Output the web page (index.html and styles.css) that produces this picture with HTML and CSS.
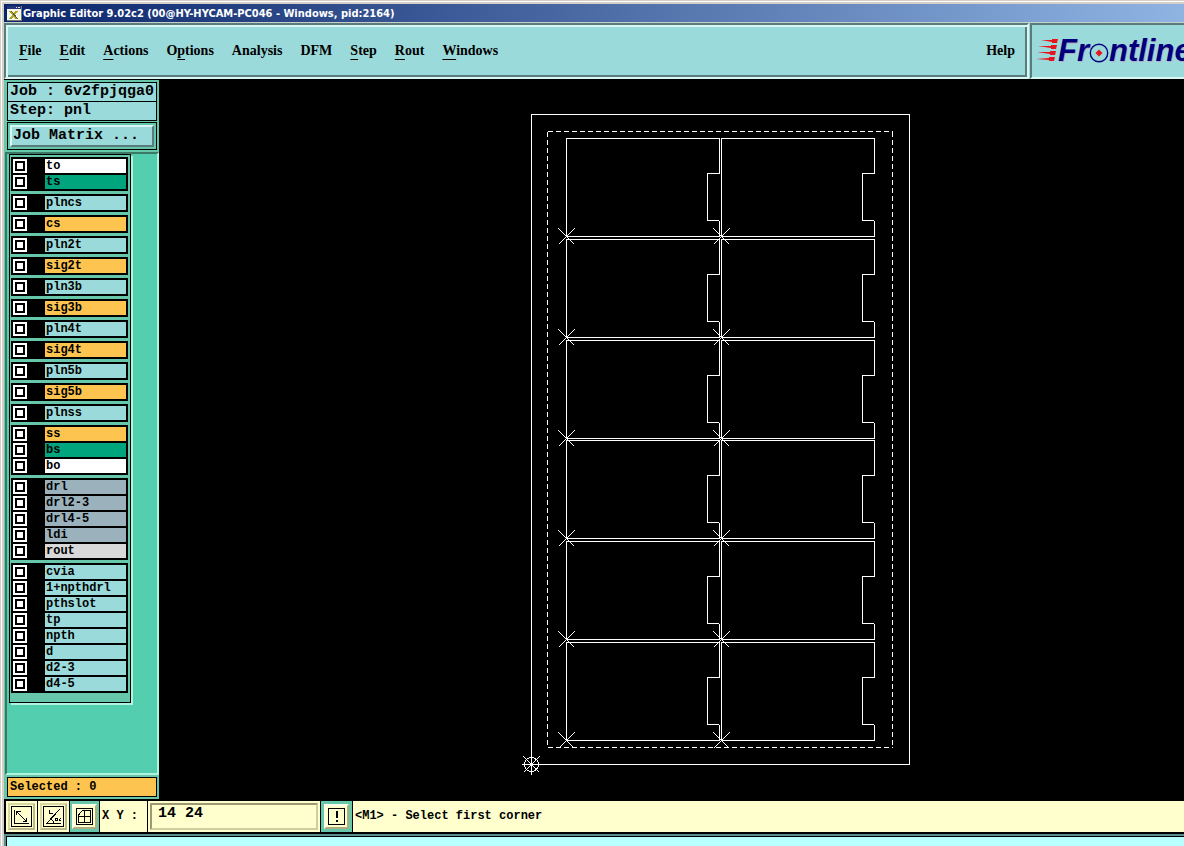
FILE: index.html
```html
<!DOCTYPE html>
<html lang="en">
<head>
<meta charset="utf-8">
<title>Graphic Editor</title>
<link rel="stylesheet" href="styles.css">
</head>
<body>
<div class="window">
  <header class="titlebar">
    <svg class="app-icon" width="15" height="15" viewBox="0 0 15 15" aria-hidden="true" shape-rendering="crispEdges">
      <rect width="15" height="15" fill="#77776f"/>
      <rect width="14" height="14" fill="#f6f6ea"/>
      <rect width="14" height="3" fill="#24357c"/>
      <path d="M9 1.500h1M11 1.500h2" stroke="#ddd"/>
      <path d="M3 5l7 8M10 5l-7 8" stroke="#a8a428" stroke-width="2"/>
      <path d="M4 5l7 8" stroke="#5d5c22"/>
    </svg>
    <h1 class="title">Graphic Editor 9.02c2 (00@HY-HYCAM-PC046 - Windows, pid:2164)</h1>
  </header>

  <div class="menu-row">
    <nav class="menubar">
      <button class="menu"><u>F</u>ile</button>
      <button class="menu"><u>E</u>dit</button>
      <button class="menu"><u>A</u>ctions</button>
      <button class="menu">O<u>p</u>tions</button>
      <button class="menu">Analysis</button>
      <button class="menu">DFM</button>
      <button class="menu"><u>S</u>tep</button>
      <button class="menu"><u>R</u>out</button>
      <button class="menu"><u>W</u>indows</button>
      <button class="menu menu-help">Help</button>
    </nav>
    <div class="brand">
      <svg width="22" height="24" viewBox="0 0 22 24" aria-hidden="true">
        <path d="M5 1l11 0 0-1 6 0-1 4-5 0 0-1zM2 7l13 0 0-1 6 0-1 4-5 0 0-1zM1 13l13 0 0-1 6 0-1 4-5 0 0-1zM0 20l13-1 0-1 6 0-1 4-5 0 0-1z" fill="#e8131c"/>
      </svg>
      <span class="brand-text">Fr</span>
      <svg width="20" height="24" viewBox="0 0 20 24" role="img" aria-label="o">
        <circle cx="10" cy="14" r="8.700" fill="none" stroke="#00007d" stroke-width="1.400"/>
        <path d="M10 10.500l3.500 3.500-3.500 3.500L6.500 14z" fill="#e8131c"/>
      </svg>
      <span class="brand-text">ntline</span>
    </div>
  </div>

  <main class="work">
    <aside class="sidebar">
      <div class="job">
        <div class="field">Job : 6v2fpjqga0</div>
        <div class="field">Step: pnl</div>
      </div>
      <div class="matrix"><button class="matrix-button">Job Matrix ...</button></div>
      <div class="layers-pane">
        <div class="layers">
          <div class="group">
            <label class="layer"><input type="checkbox"><span class="name white">to</span></label>
            <label class="layer"><input type="checkbox"><span class="name green">ts</span></label>
          </div>
          <div class="group"><label class="layer"><input type="checkbox"><span class="name">plncs</span></label></div>
          <div class="group"><label class="layer"><input type="checkbox"><span class="name orange">cs</span></label></div>
          <div class="group"><label class="layer"><input type="checkbox"><span class="name">pln2t</span></label></div>
          <div class="group"><label class="layer"><input type="checkbox"><span class="name orange">sig2t</span></label></div>
          <div class="group"><label class="layer"><input type="checkbox"><span class="name">pln3b</span></label></div>
          <div class="group"><label class="layer"><input type="checkbox"><span class="name orange">sig3b</span></label></div>
          <div class="group"><label class="layer"><input type="checkbox"><span class="name">pln4t</span></label></div>
          <div class="group"><label class="layer"><input type="checkbox"><span class="name orange">sig4t</span></label></div>
          <div class="group"><label class="layer"><input type="checkbox"><span class="name">pln5b</span></label></div>
          <div class="group"><label class="layer"><input type="checkbox"><span class="name orange">sig5b</span></label></div>
          <div class="group"><label class="layer"><input type="checkbox"><span class="name">plnss</span></label></div>
          <div class="group">
            <label class="layer"><input type="checkbox"><span class="name orange">ss</span></label>
            <label class="layer"><input type="checkbox"><span class="name green">bs</span></label>
            <label class="layer"><input type="checkbox"><span class="name white">bo</span></label>
          </div>
          <div class="group">
            <label class="layer"><input type="checkbox"><span class="name slate">drl</span></label>
            <label class="layer"><input type="checkbox"><span class="name slate">drl2-3</span></label>
            <label class="layer"><input type="checkbox"><span class="name slate">drl4-5</span></label>
            <label class="layer"><input type="checkbox"><span class="name slate">ldi</span></label>
            <label class="layer"><input type="checkbox"><span class="name gray">rout</span></label>
          </div>
          <div class="group">
            <label class="layer"><input type="checkbox"><span class="name">cvia</span></label>
            <label class="layer"><input type="checkbox"><span class="name">1+npthdrl</span></label>
            <label class="layer"><input type="checkbox"><span class="name">pthslot</span></label>
            <label class="layer"><input type="checkbox"><span class="name">tp</span></label>
            <label class="layer"><input type="checkbox"><span class="name">npth</span></label>
            <label class="layer"><input type="checkbox"><span class="name">d</span></label>
            <label class="layer"><input type="checkbox"><span class="name">d2-3</span></label>
            <label class="layer"><input type="checkbox"><span class="name">d4-5</span></label>
          </div>
        </div>
      </div>
      <div class="selected">Selected : 0</div>
    </aside>

    <svg class="canvas" role="img" aria-label="Panel layout" shape-rendering="crispEdges">
      <defs>
        <path id="cell" d="M0 0H153V35H141V82H152L153 83V98H0Z"/>
        <path id="mark" d="M-8-8L8 8M-8 8L8-8"/>
      </defs>
      <g transform="translate(372.5 35.5)" fill="none" stroke="#fff">
        <rect width="378" height="650"/>
        <path d="M16 17H361" stroke-dasharray="5 3"/>
        <path d="M361 17V633" stroke-dasharray="5 3"/>
        <path d="M16 17V633" stroke-dasharray="5 3"/>
        <path d="M16 633H361" stroke-dasharray="5 3"/>
        <use href="#cell" x="35" y="24"/><use href="#cell" x="190" y="24"/>
        <use href="#cell" x="35" y="125"/><use href="#cell" x="190" y="125"/>
        <use href="#cell" x="35" y="226"/><use href="#cell" x="190" y="226"/>
        <use href="#cell" x="35" y="326"/><use href="#cell" x="190" y="326"/>
        <use href="#cell" x="35" y="427"/><use href="#cell" x="190" y="427"/>
        <use href="#cell" x="35" y="528"/><use href="#cell" x="190" y="528"/>
        <use href="#mark" x="35" y="122"/><use href="#mark" x="190" y="122"/>
        <use href="#mark" x="35" y="223"/><use href="#mark" x="190" y="223"/>
        <use href="#mark" x="35" y="324"/><use href="#mark" x="190" y="324"/>
        <use href="#mark" x="35" y="424"/><use href="#mark" x="190" y="424"/>
        <use href="#mark" x="35" y="525"/><use href="#mark" x="190" y="525"/>
        <use href="#mark" x="35" y="626"/><use href="#mark" x="190" y="626"/>
        <use href="#mark" y="650"/>
        <circle r="7" cy="650"/>
        <path d="M-10 650H10M0 640V660"/>
      </g>
    </svg>
  </main>

  <footer class="toolbar">
    <button class="tool" aria-label="Zoom to area">
      <svg width="21" height="21" viewBox="0 0 21 21" fill="none" stroke="#000" shape-rendering="crispEdges">
        <path d="M.5.5h20v20H.5zM3.500 3.500v14h14M5 5l11 11M5.500 9V5.500h4M12 15.500h3.500v-4"/>
      </svg>
    </button>
    <button class="tool" aria-label="Angle mode">
      <svg width="21" height="21" viewBox="0 0 21 21" fill="none" stroke="#000" shape-rendering="crispEdges">
        <path d="M.5.5h20v20H.5zM17 3L3.500 17.500H18M6.500 4v3.500h3M8 12l3 5M12.500 12.500h2v2h-2zM18 12l-2 2 2 1"/>
      </svg>
    </button>
    <button class="tool tool-framed" aria-label="Grid snap">
      <svg width="17" height="17" viewBox="0 0 17 17" fill="none" stroke="#000" shape-rendering="crispEdges">
        <path d="M.5.5h16v16H.5zM2.500 14.500V7l4-4.500h8v12zM8.500 2.500v12M2.500 8.500h12"/>
      </svg>
    </button>
    <label class="xy-label" for="xy">X Y :</label>
    <div class="xy-box"><input class="xy" id="xy" type="text" value="14 24"></div>
    <button class="tool tool-framed tool-alert" aria-label="Alert">
      <svg width="17" height="17" viewBox="0 0 17 17" fill="none" stroke="#000" shape-rendering="crispEdges">
        <path d="M.5.5h16v16H.5z"/><path d="M8 3h2v7H8zM8 12h2v2H8z" fill="#000" stroke="none"/>
      </svg>
    </button>
    <output class="status">&lt;M1&gt; - Select first corner</output>
  </footer>
  <div class="message"></div>
</div>
</body>
</html>
```
FILE: styles.css
```css
*, *::before { box-sizing: border-box; }

body {
  margin: 0;
  background: #000;
  color: #000;
  font: bold 12px/14px "Liberation Mono", monospace;
}

button {
  margin: 0;
  padding: 0;
  border: 0;
  border-radius: 0;
  background: none;
  color: inherit;
  font: inherit;
}

.window {
  display: flex;
  flex-direction: column;
  min-height: 100vh;
  padding: 4px 0 0 4px;
  overflow: hidden;
  background: #000;
  box-shadow: inset 1px 1px #d4d0c8, inset 2px 2px #fff, inset 4px 4px #d4d0c8;
}

/* Title bar */
.titlebar {
  display: flex;
  align-items: center;
  gap: 1px;
  height: 19px;
  padding: 1px 3px 0;
  border-bottom: 1px solid #c8d0cc;
  background: linear-gradient(90deg, #0a246a, #8fb4e2);
}
.title {
  margin: 0;
  color: #fff;
  font: bold 11px/16px "DejaVu Sans Condensed", "DejaVu Sans", sans-serif;
  white-space: nowrap;
}

/* Menu bar and brand */
.menu-row {
  display: flex;
  height: 56px;
  background: #9bdada;
}
.menubar {
  display: flex;
  flex: 1;
  align-items: center;
  gap: 18px;
  padding: 0 12px 0 13px;
  border: 2px solid;
  border-color: #5b7c7c #d8f6f4 #d8f6f4 #5b7c7c;
  box-shadow: inset 2px 2px #d8f6f4, inset -2px -2px #5b7c7c;
  font: bold 14px/18px "Liberation Serif", serif;
}
.menu u { text-underline-offset: 4px; text-decoration-thickness: 1px; }
.menu-help { margin-left: auto; }
.brand {
  display: flex;
  flex: none;
  align-items: center;
  width: 154px;
  margin-left: 1px;
  padding-left: 4px;
  border: 2px solid;
  border-color: #5b7c7c #9bdada #d8f6f4 #5b7c7c;
  border-right: 0;
  overflow: hidden;
}
.brand svg { flex: none; }
.brand-text {
  color: #00007d;
  font: italic bold 31px/32px "Liberation Sans", sans-serif;
  text-shadow: 1px 1px #b9a9c4;
}

/* Sidebar */
.work { display: flex; flex: 1; }
.sidebar {
  display: flex;
  flex: none;
  flex-direction: column;
  width: 155px;
  padding: 2px 2px 2px 3px;
  border-top: 1px solid #000;
  background: #66c7ab;
}
.job, .matrix-button { font-size: 15px; }
.job { border: 1px solid #000; border-bottom: 0; }
.field {
  height: 19px;
  padding: 0 2px;
  border-bottom: 1px solid #000;
  background: #9bdada;
  line-height: 18px;
  white-space: pre;
}
.matrix {
  margin-top: 1px;
  padding: 2px;
  border: 1px solid #000;
}
.matrix-button {
  display: block;
  width: 100%;
  height: 22px;
  padding-left: 1px;
  border: 2px solid;
  border-color: #d8f6f4 #5b7c7c #5b7c7c #d8f6f4;
  background: #9bdada;
  line-height: 18px;
  text-align: left;
}
.layers-pane {
  flex: 1;
  margin: 2px -2px 2px;
  border: 2px solid;
  border-color: #3b7965 #b0f3df #b0f3df #3b7965;
  background: #53cfaf;
}
.layers {
  display: flex;
  flex-direction: column;
  gap: 3px;
  width: 122px;
  margin-left: 2px;
  padding: 2px 2px 9px 1px;
  border: 1px solid #000;
  box-shadow: 2px 2px #b0f3df;
  background: #66c7ab;
}
.group {
  display: grid;
  gap: 2px;
  padding: 2px;
  background: #000;
}
.layer {
  display: grid;
  grid-template-columns: 14px 1fr;
  gap: 18px;
}
.layer input {
  display: grid;
  place-items: center;
  width: 14px;
  height: 14px;
  margin: 0;
  appearance: none;
  background: #fff;
}
.layer input::before {
  content: "";
  width: 10px;
  height: 10px;
  border: 2px solid #000;
}
.layer input:checked::before { background: #000; }
.name {
  padding-left: 1px;
  background: #9bdada;
}
.white { background: #fff; }
.green { background: #00a57d; }
.orange { background: #fdc44f; }
.slate { background: #9bb2bd; }
.gray { background: #d8d8d8; }
.selected {
  height: 20px;
  padding-left: 2px;
  border: 1px solid #000;
  background: #fdc44f;
  line-height: 18px;
}

.canvas {
  flex: 1;
  min-width: 0;
  background: #000;
}

/* Coordinate and status bar */
.toolbar {
  display: flex;
  gap: 1px;
  padding: 2px 0 2px 2px;
  background: #000;
}
.tool {
  display: grid;
  place-items: center;
  width: 31px;
  height: 31px;
  background: #ffffcd;
}
.tool svg {
  box-sizing: content-box;
  padding: 1px;
  border: 2px solid;
  border-color: #d8d8a4 #b9b98c #b9b98c #d8d8a4;
}
.tool-framed {
  width: 29px;
  background: #66c7ab;
}
.tool-framed svg {
  padding: 2px;
  border-color: #ffffe8 #b0ac80 #b0ac80 #ffffe8;
  background: #ffffcd;
}
.tool-alert { width: 31px; }
.xy-label {
  width: 47px;
  padding-left: 2px;
  background: #ffffcd;
  line-height: 31px;
}
.xy-box {
  width: 172px;
  padding: 2px;
  background: #ffffcd;
}
.xy {
  display: block;
  width: 100%;
  height: 27px;
  margin: 0;
  padding: 0 0 6px 6px;
  border: 2px solid;
  border-color: #9d9a72 #d0ce9e #d0ce9e #9d9a72;
  border-radius: 0;
  background: #ffffcd;
  color: #000;
  font: bold 15px/18px "Liberation Mono", monospace;
}
.status {
  flex: 1;
  padding-left: 2px;
  background: #ffffcd;
  line-height: 31px;
}
.message {
  height: 12px;
  border: 2px solid #5b8f8f;
  border-width: 2px 0 0 2px;
  background: #b8ffff;
  box-shadow: inset 1px 1px #000;
}
```
